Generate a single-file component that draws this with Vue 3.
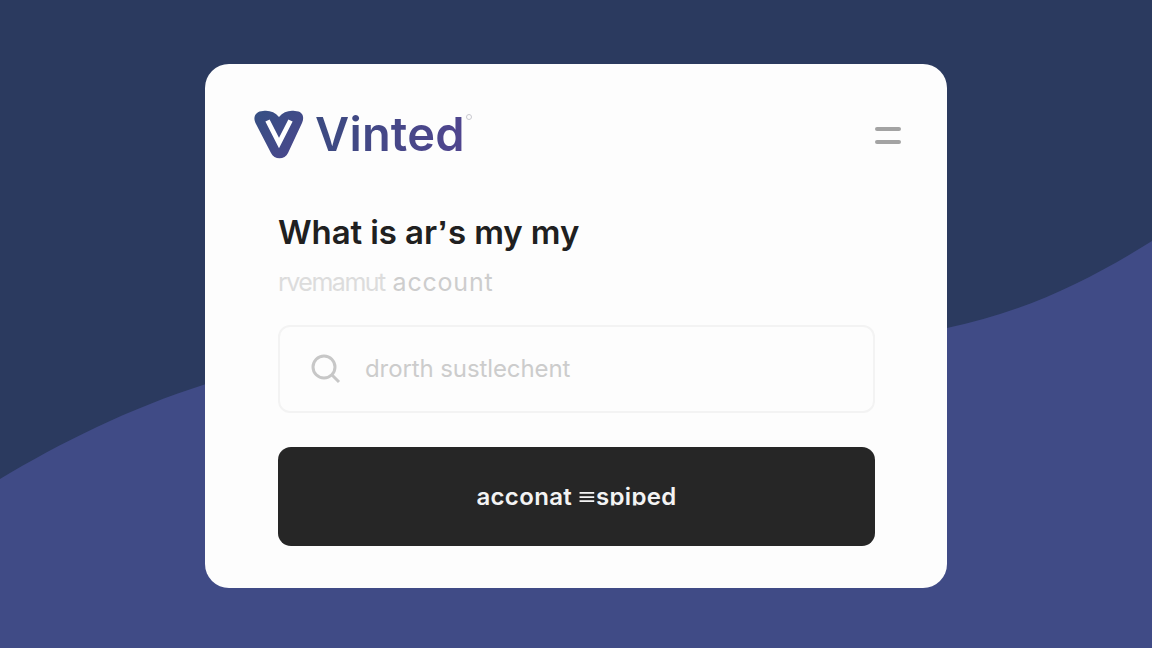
<template>
  <main class="page">
    <svg class="wave" viewBox="0 0 1152 648" preserveAspectRatio="none" aria-hidden="true">
      <path d="M0 479C60 443 130 408 206 384C450 325 720 370 947 328C1025 312 1090 280 1152 241V648H0Z" fill="#404b86" />
    </svg>
    <section class="card">
      <header class="header">
        <div class="brand">
          <svg class="mark" viewBox="0 0 50 50" aria-hidden="true">
            <defs>
              <linearGradient id="mark-fill" x1="0" y1="0" x2="1" y2="1">
                <stop offset="0" stop-color="#365083" />
                <stop offset="1" stop-color="#4b468d" />
              </linearGradient>
            </defs>
            <path d="M9 1C15 0 21 2 25 7C29 2 35 0 41 1C48 1 51 6 48 13L34 43C31 50 20 50 17 43L2 14C-2 7 2 1 9 1Z" fill="url(#mark-fill)" />
            <path d="M13.500 10.500L25 33L36.500 10.500" fill="none" stroke="#fff" stroke-width="4.800" />
          </svg>
          <span class="wordmark">Vinted</span><span class="dot"></span>
        </div>
        <button class="menu" aria-label="Menu"><i></i><i></i></button>
      </header>
      <div class="content">
        <h1 class="title">What is ar<span class="apostrophe">’</span>s my my</h1>
        <p class="subtitle"><span>rvemamut</span> account</p>
        <div class="search">
          <svg class="lens" viewBox="0 0 30 30" fill="none" stroke="#c7c7c7" stroke-width="3" aria-hidden="true">
            <circle cx="13" cy="13" r="11" />
            <path d="M20.500 20.500L28 28" />
          </svg>
          <span class="placeholder">drorth sustlechent</span>
        </div>
        <button class="submit"><span class="label">acconat <span class="bars">≡</span>spiped</span></button>
      </div>
    </section>
  </main>
</template>

<script setup>
</script>

<style>
body {
  margin: 0;
}
</style>

<style scoped>
.page {
  position: relative;
  box-sizing: border-box;
  width: 1152px;
  height: 648px;
  padding: 64px 205px 60px;
  overflow: hidden;
  background: #2b3a5f;
  font-family: Inter, "Liberation Sans", sans-serif;
}
.wave {
  position: absolute;
  inset: 0;
  width: 100%;
  height: 100%;
}
.card {
  position: relative;
  box-sizing: border-box;
  width: 742px;
  height: 524px;
  padding: 46px 46px 0 49px;
  border-radius: 24px;
  background: #fdfdfd;
}
.header {
  display: flex;
  justify-content: space-between;
  height: 50px;
}
.brand {
  display: flex;
}
.mark {
  width: 50px;
  height: 50px;
}
.wordmark {
  margin-left: 11px;
  color: transparent;
  background: linear-gradient(100deg, #3b4a80, #50458f);
  background-clip: text;
  font-size: 47px;
  line-height: 47px;
  font-weight: 600;
  letter-spacing: 0.2px;
}
.dot {
  width: 4px;
  height: 4px;
  margin: 4px 0 0 1px;
  border: 1px solid #c9c9cf;
  border-radius: 50%;
}
.menu {
  display: flex;
  flex-direction: column;
  gap: 9px;
  padding: 17px 0 0;
  border: 0;
  background: none;
}
.menu i {
  width: 26px;
  height: 4px;
  border-radius: 2px;
  background: #a3a3a3;
}
.content {
  width: 597px;
  margin: 50px 0 0 24px;
}
.title {
  margin: 0;
  color: #202020;
  font-size: 33px;
  line-height: 44px;
  font-weight: 600;
  letter-spacing: -0.1px;
  white-space: nowrap;
}
.apostrophe {
  margin: 0 1px;
  font-family: "Liberation Sans", sans-serif;
  line-height: 1;
}
.subtitle {
  margin: 11px 0 0;
  color: #cdcdcd;
  font-size: 25px;
  line-height: 34px;
  letter-spacing: 0.8px;
  white-space: nowrap;
}
.subtitle span {
  color: #dcdcdc;
  letter-spacing: -1.5px;
}
.search {
  display: flex;
  align-items: center;
  box-sizing: border-box;
  height: 88px;
  margin-top: 26px;
  padding-left: 31px;
  border: 2px solid #f3f3f3;
  border-radius: 12px;
}
.lens {
  width: 30px;
  height: 30px;
  margin-right: 24px;
}
.placeholder {
  color: #cccccc;
  font-size: 24px;
  line-height: 32px;
  letter-spacing: -0.1px;
  white-space: nowrap;
}
.submit {
  display: flex;
  align-items: center;
  justify-content: center;
  width: 597px;
  height: 99px;
  margin-top: 34px;
  padding: 0;
  border: 0;
  border-radius: 13px;
  color: #f3f3f3;
  background: #262626;
  font: 600 24px/32px Inter, "Liberation Sans", sans-serif;
  letter-spacing: 0.35px;
}
.label {
  display: block;
  clip-path: inset(0 0 7px);
  white-space: nowrap;
}
.bars {
  display: inline-block;
  margin: 0 2px 0 1px;
  font-weight: 400;
  transform: scaleX(1.25);
}
</style>
